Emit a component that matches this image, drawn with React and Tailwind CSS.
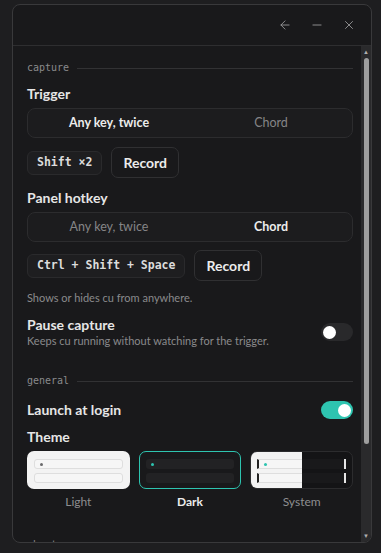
import React, { useState } from 'react';
import { ArrowLeft, Minus, X } from 'lucide-react';

const SectionLabel = ({ children, className = '' }) => (
  <div className={`flex items-center gap-[8px] h-[12px] ${className}`}>
    <span className="font-['DejaVu_Sans_Mono',monospace] text-[10px] leading-[12px] text-[#8a8a8c]">{children}</span>
    <div className="flex-1 h-px bg-[#323234]" />
  </div>
);

const Segmented = ({ value, onChange }) => (
  <div className="grid grid-cols-2 h-[30px] rounded-[8px] border border-[#2c2c2e] bg-[#1c1c1e] text-[12.5px]">
    {['Any key, twice', 'Chord'].map((opt) => (
      <button
        key={opt}
        onClick={() => onChange(opt)}
        className={`flex items-center justify-center ${value === opt ? 'font-bold text-[#ececec]' : 'text-[#858587]'}`}
      >
        {opt}
      </button>
    ))}
  </div>
);

const KeyRow = ({ combo }) => (
  <div className="flex items-center gap-[9px] h-[31px]">
    <span className="h-[24px] px-[9px] flex items-center rounded-[6px] border border-[#2a2a2c] bg-[#1e1e20] font-['DejaVu_Sans_Mono',monospace] font-bold text-[11.5px] text-[#dcdcdc] whitespace-pre">
      {combo}
    </span>
    <button className="h-[31px] px-[11px] rounded-[7px] border border-[#303032] bg-[#19191b] font-bold text-[14px] text-[#ececec]">
      Record
    </button>
  </div>
);

const Toggle = ({ on, onClick }) => (
  <button
    onClick={onClick}
    className={`w-[32px] h-[18px] rounded-full flex items-center px-[2px] ${on ? 'bg-[#2ec4b0] justify-end' : 'bg-[#29292b] justify-start'}`}
  >
    <span className="w-[13px] h-[13px] rounded-full bg-white" />
  </button>
);

const PreviewRows = ({ light, dot }) => (
  <div className="flex flex-col gap-[4px]">
    <div className={`h-[10px] rounded-[3px] flex items-center pl-[5px] ${light ? 'bg-[#f6f6f6] border border-[#dedede]' : 'bg-[#222224]'}`}>
      <span className={`w-[3px] h-[3px] rounded-full ${dot}`} />
    </div>
    <div className={`h-[10px] rounded-[3px] ${light ? 'bg-[#f6f6f6] border border-[#dedede]' : 'bg-[#222224]'}`} />
  </div>
);

const ThemeCard = ({ name, selected, onClick }) => {
  let inner;
  if (name === 'Light') {
    inner = (
      <div className="h-[38px] rounded-[7px] bg-[#f3f3f3] pt-[8px] px-[7px]">
        <PreviewRows light dot="bg-[#6a6a6c]" />
      </div>
    );
  } else if (name === 'Dark') {
    inner = (
      <div className="h-[38px] rounded-[7px] bg-[#19191b] border border-[#2ec4b0] pt-[7px] px-[6px]">
        <PreviewRows dot="bg-[#2ec4b0]" />
      </div>
    );
  } else {
    inner = (
      <div className="relative h-[38px] rounded-[7px] overflow-hidden border border-[#2c2c2e] bg-[#141416]">
        <div className="pt-[7px] px-[6px]">
          <div className="flex flex-col gap-[4px]">
            <div className="h-[10px] bg-[#19191b] border-r-2 border-[#e6e6e6]" />
            <div className="h-[10px] bg-[#19191b] border-r-2 border-[#e6e6e6]" />
          </div>
        </div>
        <div className="absolute inset-y-0 left-0 w-1/2 overflow-hidden bg-[#f3f3f3]">
          <div className="w-[100px] pt-[7px] pl-[6px]">
            <div className="flex flex-col gap-[4px]">
              <div className="h-[10px] bg-[#f6f6f6] border border-[#dedede] border-l-2 border-l-[#222] flex items-center pl-[5px]">
                <span className="w-[3px] h-[3px] rounded-full bg-[#2ec4b0]" />
              </div>
              <div className="h-[10px] bg-[#f6f6f6] border border-[#dedede] border-l-2 border-l-[#222]" />
            </div>
          </div>
        </div>
      </div>
    );
  }
  return (
    <button onClick={onClick} className="flex flex-col gap-[6px] text-left">
      {inner}
      <span className={`text-center text-[12px] leading-[14px] ${selected ? 'font-bold text-[#ececec]' : 'text-[#8e8e90]'}`}>{name}</span>
    </button>
  );
};

export default function App() {
  const [trigger, setTrigger] = useState('Any key, twice');
  const [hotkey, setHotkey] = useState('Chord');
  const [paused, setPaused] = useState(false);
  const [launch, setLaunch] = useState(true);
  const [theme, setTheme] = useState('Dark');

  return (
    <div className="w-[381px] h-[553px] bg-[#1e1e20] pt-[4px] pl-[12px] pr-[9px] pb-[10px] font-['Lato',sans-serif] text-[#e6e6e6]">
      <div className="h-full flex flex-col rounded-[8px] border border-[#39393b] bg-[#19191b] overflow-hidden">
        {/* Title bar */}
        <div className="h-[41px] flex items-center justify-end gap-[18px] pr-[15px] border-b border-[#2e2e30] text-[#9a9a9c]">
          <ArrowLeft size={14} strokeWidth={1.5} />
          <Minus size={14} strokeWidth={1.5} />
          <X size={14} strokeWidth={1.5} />
        </div>

        <div className="flex-1 flex min-h-0">
          {/* Content */}
          <div className="flex-1 overflow-hidden pt-[16px] pl-[14px] pr-[8px]">
            <SectionLabel>capture</SectionLabel>

            <div className="mt-[11px] text-[14px] leading-[18px] font-bold">Trigger</div>
            <div className="mt-[5px]">
              <Segmented value={trigger} onChange={setTrigger} />
            </div>
            <div className="mt-[9px]">
              <KeyRow combo="Shift ×2" />
            </div>

            <div className="mt-[11px] text-[14px] leading-[18px] font-bold">Panel hotkey</div>
            <div className="mt-[5px]">
              <Segmented value={hotkey} onChange={setHotkey} />
            </div>
            <div className="mt-[8px]">
              <KeyRow combo="Ctrl + Shift + Space" />
            </div>
            <div className="mt-[10px] text-[11px] leading-[14px] text-[#8a8a8c]">Shows or hides cu from anywhere.</div>

            <div className="mt-[11px] flex items-center justify-between">
              <div>
                <div className="text-[14px] leading-[18px] font-bold">Pause capture</div>
                <div className="text-[11px] leading-[14px] text-[#8a8a8c]">Keeps cu running without watching for the trigger.</div>
              </div>
              <Toggle on={paused} onClick={() => setPaused(!paused)} />
            </div>

            <SectionLabel className="mt-[27px]">general</SectionLabel>

            <div className="mt-[14px] flex items-center justify-between h-[18px]">
              <div className="text-[14px] leading-[18px] font-bold">Launch at login</div>
              <Toggle on={launch} onClick={() => setLaunch(!launch)} />
            </div>

            <div className="mt-[9px] text-[14px] leading-[18px] font-bold">Theme</div>
            <div className="mt-[5px] grid grid-cols-3 gap-[9px]">
              {['Light', 'Dark', 'System'].map((t) => (
                <ThemeCard key={t} name={t} selected={theme === t} onClick={() => setTheme(t)} />
              ))}
            </div>

            <SectionLabel className="mt-[30px]">about</SectionLabel>
          </div>

          {/* Scrollbar */}
          <div className="w-[10px] bg-[#2a2a2c] flex flex-col items-center py-[2px]">
            <span className="text-[6px] leading-[8px] text-[#b0b0b0]">▲</span>
            <div className="mt-[2px] w-[5px] h-[386px] rounded-full bg-[#9e9e9e]" />
            <div className="flex-1" />
            <span className="text-[6px] leading-[8px] text-[#b0b0b0]">▼</span>
          </div>
        </div>
      </div>
    </div>
  );
}
